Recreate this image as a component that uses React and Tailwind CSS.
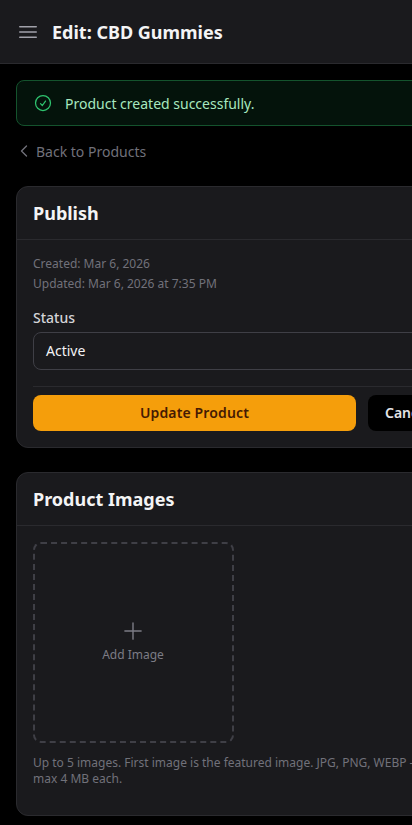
import React from "react";
import { HiOutlineBars3, HiOutlineCheckCircle, HiOutlineChevronLeft, HiOutlinePlus } from "react-icons/hi2";

function Card({ title, children }) {
  return (
    <section className="w-[447px] rounded-xl border border-[#2a2a2e] bg-[#1a1a1d]">
      <div className="h-[53px] flex items-center border-b border-[#2a2a2e] px-4">
        <h2 className="text-[18px] font-bold leading-none text-[#f4f4f5]">{title}</h2>
      </div>
      {children}
    </section>
  );
}

export default function App() {
  return (
    <div className="h-[825px] w-[412px] overflow-hidden bg-black font-['Noto_Sans',sans-serif]">
      <header className="h-16 flex items-center gap-3 border-b border-[#2a2a2e] bg-[#1a1a1d] px-4">
        <HiOutlineBars3 className="w-6 h-6 text-[#a1a1aa]" />
        <h1 className="text-[18px] font-bold leading-7 mt-px text-[#f4f4f5]">Edit: CBD Gummies</h1>
      </header>

      <main className="px-4 pt-4">
        <div className="w-[447px] h-[46px] flex items-center gap-3 rounded-lg border border-[#14532d] bg-[#04130b] px-4">
          <HiOutlineCheckCircle className="w-5 h-5 text-[#2fc46f]" />
          <span className="text-[14px] text-[#a7e8bf]">Product created successfully.</span>
        </div>

        <a className="mt-[15px] mb-[25px] h-5 flex items-center gap-1 text-[14px] text-[#71717a]">
          <HiOutlineChevronLeft className="w-4 h-4" strokeWidth={2} />
          Back to Products
        </a>

        <div className="flex flex-col gap-6">
          <Card title="Publish">
            <div className="px-4 pt-[14px] pb-4">
              <p className="text-[12px] leading-5 text-[#71717a]">Created: Mar 6, 2026</p>
              <p className="text-[12px] leading-5 text-[#71717a]">Updated: Mar 6, 2026 at 7:35 PM</p>
              <label className="mt-[14px] mb-1 block text-[14px] leading-5 font-medium text-[#d4d4d8]">Status</label>
              <div className="h-[38px] flex items-center rounded-lg border border-[#3f3f46] bg-[#1a1a1d] px-3 pb-[2px] text-[14px] text-[#f4f4f5]">
                Active
              </div>
              <div className="mt-4 flex gap-3 border-t border-[#2a2a2e] pt-2">
                <button className="h-9 flex-1 rounded-lg bg-[#f59e0b] pb-[2px] text-[14px] font-semibold tracking-[0.01em] text-[#451a03]">
                  Update Product
                </button>
                <button className="h-9 w-[78px] rounded-lg bg-black pb-[2px] pl-[17px] text-left text-[14px] font-semibold text-[#e4e4e7]">
                  Cancel
                </button>
              </div>
            </div>
          </Card>

          <Card title="Product Images">
            <div className="p-4">
              <div className="w-[201px] h-[201px] flex flex-col items-center justify-center rounded-lg border-2 border-dashed border-[#3f3f46] pb-[3px] pr-px text-[#7c7c85]">
                <HiOutlinePlus className="w-[26px] h-[26px]" strokeWidth={1.3} />
                <span className="mt-[2px] text-[12px]">Add Image</span>
              </div>
              <p className="mt-3 mb-3 text-[12px] leading-4 text-[#71717a]">
                Up to 5 images. First image is the featured image. JPG, PNG, WEBP — max 4 MB each.
              </p>
            </div>
          </Card>
        </div>
      </main>
    </div>
  );
}
